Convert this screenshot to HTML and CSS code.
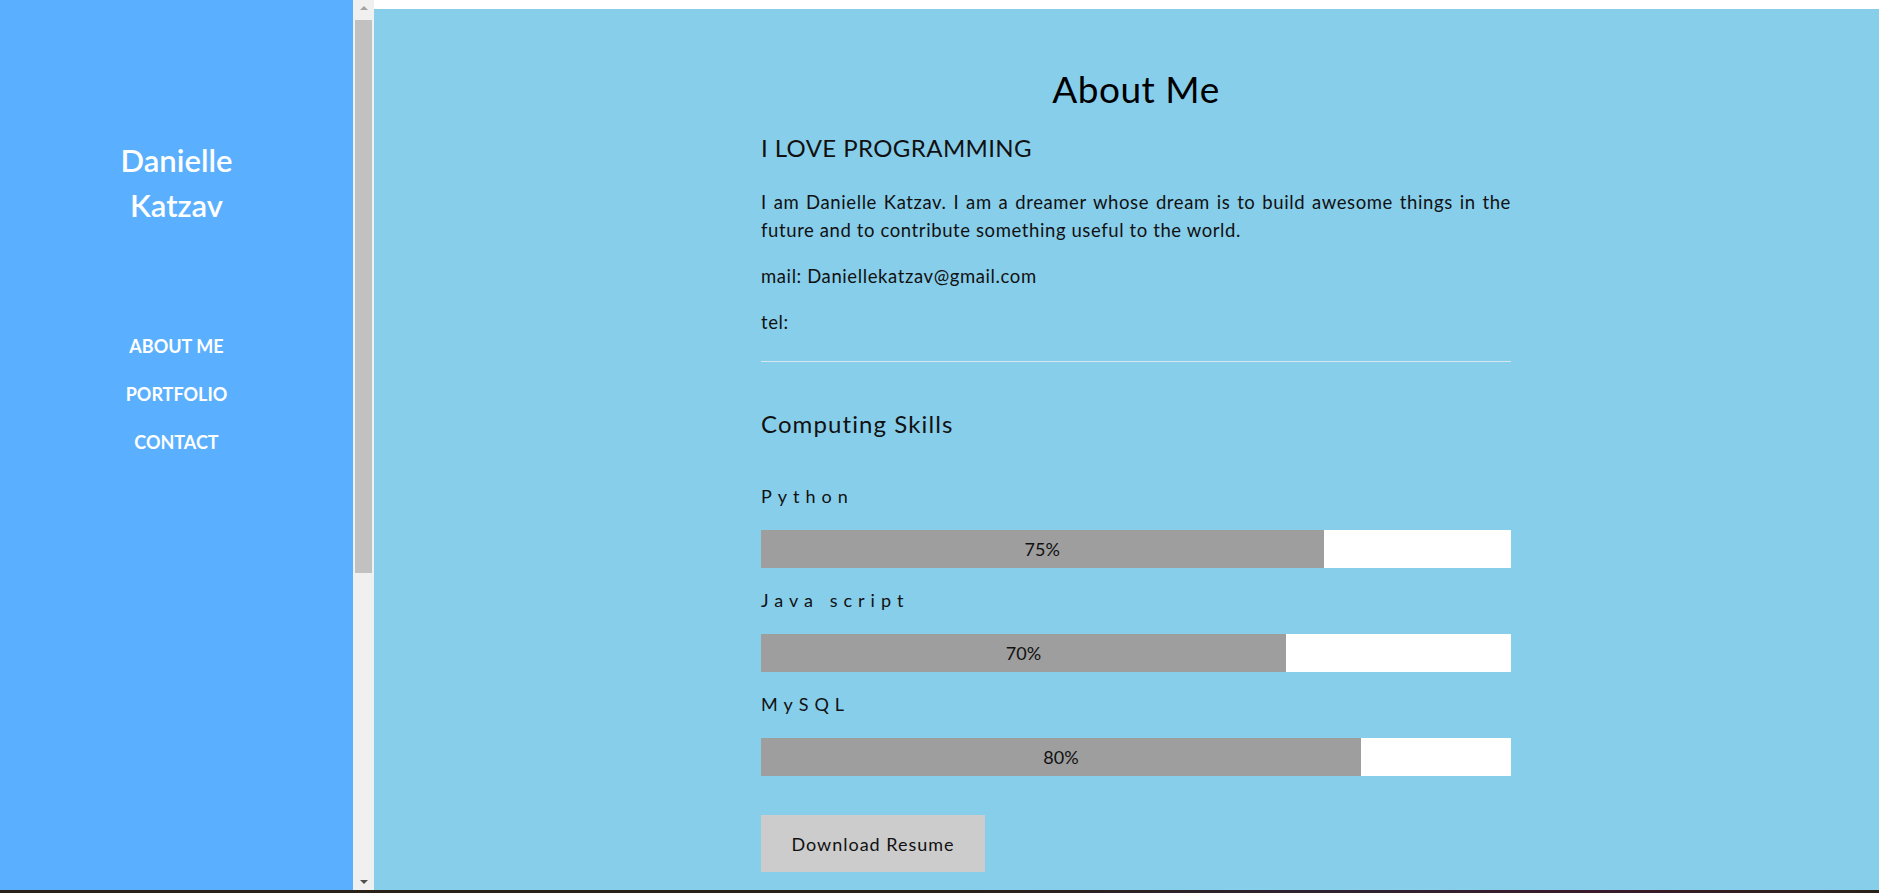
FILE: index.html
```html
<!DOCTYPE html>
<html>
<head>
<meta charset="utf-8">
<link rel="stylesheet" href="styles.css">
</head>
<body>
<div class="screen">
  <div class="row">
    <aside class="sidebar">
      <div class="name">Danielle<br>Katzav</div>
      <nav class="nav">
        <a class="nav-link">ABOUT ME</a>
        <a class="nav-link">PORTFOLIO</a>
        <a class="nav-link">CONTACT</a>
      </nav>
    </aside>
    <div class="scrollbar">
      <div class="arrow-up"></div>
      <div class="thumb"></div>
      <div class="arrow-down"></div>
    </div>
    <main class="main">
      <div class="content">
        <section class="column">
          <h1 class="title">About Me</h1>
          <h2 class="subtitle">I LOVE PROGRAMMING</h2>
          <p class="text">I am Danielle Katzav. I am a dreamer whose dream is to build awesome things in the future and to contribute something useful to the world.</p>
          <p class="text">mail: Daniellekatzav@gmail.com</p>
          <p class="text">tel:</p>
          <hr class="rule">
          <h3 class="skills-title">Computing Skills</h3>
          <div class="skill">
            <div class="skill-name">Python</div>
            <div class="bar"><div class="fill" style="width:75%">75%</div></div>
          </div>
          <div class="skill">
            <div class="skill-name">Java script</div>
            <div class="bar"><div class="fill" style="width:70%">70%</div></div>
          </div>
          <div class="skill">
            <div class="skill-name">MySQL</div>
            <div class="bar"><div class="fill" style="width:80%">80%</div></div>
          </div>
          <button class="btn">Download Resume</button>
        </section>
      </div>
    </main>
  </div>
  <div class="taskbar"></div>
</div>
</body>
</html>
```

FILE: styles.css
```css
* { box-sizing: border-box; }
html, body { margin: 0; padding: 0; }
body {
  width: 1879px;
  height: 893px;
  overflow: hidden;
  font-family: "Lato", "Open Sans", sans-serif;
  background: #fff;
}
.screen { display: flex; flex-direction: column; height: 893px; }
.row { display: flex; height: 890px; }
.taskbar {
  height: 3px;
  background: linear-gradient(90deg, #2a2119 0%, #2a2119 50%, #2f2230 70%, #3a1a2a 85%, #2a2119 100%);
}
.sidebar {
  width: 353px;
  flex: none;
  background: #5aaffe;
  color: #fff;
  display: flex;
  flex-direction: column;
  align-items: center;
}
.name {
  margin-top: 138px;
  font-size: 31px;
  line-height: 45px;
  font-weight: 600;
  text-align: center;
}
.nav {
  margin-top: 94px;
  display: flex;
  flex-direction: column;
  align-items: center;
}
.nav-link {
  font-size: 18px;
  font-weight: 700;
  line-height: 48px;
  color: #fff;
}
.scrollbar {
  width: 21px;
  flex: none;
  background: #f0f0f0;
  display: flex;
  flex-direction: column;
  align-items: center;
}
.arrow-up {
  margin-top: 6px;
  width: 0; height: 0;
  border-left: 4px solid transparent;
  border-right: 4px solid transparent;
  border-bottom: 4px solid #a3a3a3;
}
.thumb {
  margin-top: 10px;
  width: 17px;
  height: 553px;
  background: #c1c1c1;
}
.arrow-down {
  margin-top: auto;
  margin-bottom: 6px;
  width: 0; height: 0;
  border-left: 4px solid transparent;
  border-right: 4px solid transparent;
  border-top: 4px solid #505050;
}
.main {
  flex: 1;
  background: #fff;
  padding-top: 9px;
  display: flex;
  flex-direction: column;
}
.content {
  flex: 1;
  background: #87ceeb;
  padding-left: 387px;
}
.column {
  width: 750px;
  color: #111;
}
.title {
  margin: 0;
  padding-top: 58px;
  font-size: 37px;
  font-weight: 400;
  line-height: 44px;
  letter-spacing: 0.5px;
  text-align: center;
  color: #000;
}
.subtitle {
  margin: 22px 0 0;
  font-size: 24px;
  font-weight: 400;
  line-height: 30px;
  letter-spacing: 0.4px;
}
.text {
  margin: 18px 0 0;
  font-size: 18.5px;
  line-height: 28px;
  letter-spacing: 0.6px;
  text-align: justify;
}
.subtitle + .text { margin-top: 25px; }
.rule {
  margin: 25px 0 0;
  border: 0;
  border-top: 1px solid #d6e6ee;
  height: 0;
}
.skills-title {
  margin: 47px 0 0;
  font-size: 24px;
  font-weight: 400;
  line-height: 30px;
  letter-spacing: 1.1px;
}
.skill { margin-top: 45px; }
.skill + .skill { margin-top: 20px; }
.skill-name {
  font-size: 18px;
  letter-spacing: 6px;
  line-height: 24px;
}
.bar {
  margin-top: 22px;
  height: 38px;
  background: #fff;
  display: flex;
}
.fill {
  background: #9e9e9e;
  height: 38px;
  font-size: 18px;
  line-height: 38px;
  text-align: center;
  color: #111;
}
.btn {
  margin-top: 39px;
  width: 224px;
  height: 57px;
  background: #cccccc;
  border: 0;
  font-family: inherit;
  font-size: 18px;
  letter-spacing: 1px;
  color: #111;
  padding: 0;
}
```
